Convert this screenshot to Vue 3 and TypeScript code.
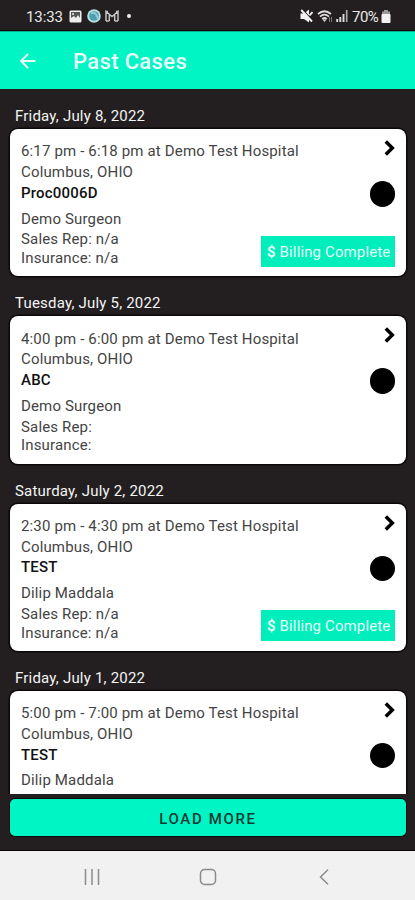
<script setup lang="ts">
interface CaseItem {
  date: string
  time: string
  name: string
  surgeon: string
  rep?: string
  insurance?: string
  billed: boolean
}

const cases: CaseItem[] = [
  { date: 'Friday, July 8, 2022', time: '6:17 pm - 6:18 pm', name: 'Proc0006D', surgeon: 'Demo Surgeon', rep: 'n/a', insurance: 'n/a', billed: true },
  { date: 'Tuesday, July 5, 2022', time: '4:00 pm - 6:00 pm', name: 'ABC', surgeon: 'Demo Surgeon', rep: '', insurance: '', billed: false },
  { date: 'Saturday, July 2, 2022', time: '2:30 pm - 4:30 pm', name: 'TEST', surgeon: 'Dilip Maddala', rep: 'n/a', insurance: 'n/a', billed: true },
  { date: 'Friday, July 1, 2022', time: '5:00 pm - 7:00 pm', name: 'TEST', surgeon: 'Dilip Maddala', billed: false },
]
</script>

<template>
  <div class="screen">
    <div class="status">
      <span class="clock">13:33</span>
      <svg class="ic-photo" width="13" height="13" viewBox="0 0 13 13">
        <rect x=".5" y=".5" width="12" height="12" rx="1.5" fill="#eee" />
        <rect x="2" y="2" width="9" height="6" fill="#555" />
        <path d="M2 10V8l3-2 2 2 2-3 2 3v2z" fill="#eee" />
        <circle cx="4" cy="4" r="1" fill="#eee" />
      </svg>
      <svg class="ic-globe" width="14" height="14" viewBox="0 0 14 14">
        <circle cx="7" cy="7" r="6.800" fill="#b9dce0" />
        <circle cx="7" cy="7" r="4.800" fill="#4b9fb0" />
        <path d="M4 4.500q3-2 5 1t1 4" fill="none" stroke="#91d0cf" stroke-width="1.800" />
      </svg>
      <svg class="ic-mail" width="14" height="12" viewBox="0 0 14 12">
        <path d="M1 11V1.500L7 6.500l6-5V11M4.300 11V4.500M9.700 11V4.500M1 11h3.300M9.700 11H13M1 1.500h2M11 1.500h2" fill="none" stroke="#c4c4c4" stroke-width="1.500" />
      </svg>
      <span class="dot"></span>
      <span class="grow"></span>
      <svg class="ic-mute" width="13" height="14" viewBox="0 0 13 14">
        <path d="M.5 4.500H4l5-4v13L4 10H.5z" fill="#f2f2f2" />
        <path d="M2.500.5l10 11" stroke="#231f20" stroke-width="1.300" />
        <path d="M1.200 1l10.800 11.500M9.500 6.500l3-3.500" stroke="#f2f2f2" stroke-width="1.900" />
      </svg>
      <svg class="ic-wifi" width="16" height="13" viewBox="0 0 16 13">
        <path d="M1 4q6.500-5.500 13 0M3 6.700q4.500-4 9 0M5.300 9q2.200-2 4.400 0" fill="none" stroke="#ddd" stroke-width="1.700" />
        <path d="M5.500 9.500h4l-2 2.500z" fill="#ddd" />
        <path d="M12.500 7v5M14.500 7v5" stroke="#777" />
      </svg>
      <svg class="ic-signal" width="12" height="12" viewBox="0 0 12 12">
        <path d="M1.200 9v3M4.300 7v5M7.500 4v8" stroke="#ddd" stroke-width="1.900" />
        <path d="M10.700 0v12" stroke="#aaa" stroke-width="1.700" />
      </svg>
      <span class="percent">70%</span>
      <svg class="ic-battery" width="10" height="13" viewBox="0 0 10 13">
        <path d="M3 0h4v1.500h2V5H1V1.500h2z" fill="#999" />
        <rect x=".5" y="4" width="9" height="9" rx="1" fill="#f2f2f2" />
      </svg>
    </div>

    <header class="bar">
      <svg width="16" height="16" viewBox="0 0 16 16">
        <path d="M15.500 8H1.500M8 1L1.200 8 8 15" fill="none" stroke="#eafff9" stroke-width="1.900" />
      </svg>
      <h1>Past Cases</h1>
    </header>

    <main class="list">
      <section v-for="(c, i) in cases" :key="i" class="group">
        <h2>{{ c.date }}</h2>
        <article class="card">
          <div class="info">
            <p>{{ c.time }} at Demo Test Hospital</p>
            <p>Columbus, OHIO</p>
            <p class="name">{{ c.name }}</p>
            <p class="surgeon">{{ c.surgeon }}</p>
            <p v-if="c.rep !== undefined" class="rep">Sales Rep: {{ c.rep }}</p>
            <p v-if="c.insurance !== undefined" class="ins">Insurance: {{ c.insurance }}</p>
          </div>
          <div class="side">
            <svg class="chev" width="12" height="18" viewBox="0 0 12 18">
              <path d="M2.800 2.500L9.300 9l-6.500 6.500" fill="none" stroke="#000" stroke-width="3.500" />
            </svg>
            <span class="circle"></span>
            <span v-if="c.billed" class="badge"><b>$</b> Billing Complete</span>
          </div>
        </article>
      </section>
    </main>

    <div class="footer">
      <button type="button">LOAD MORE</button>
    </div>

    <nav class="nav">
      <svg width="16" height="16" viewBox="0 0 16 16">
        <path d="M1.500 0v16M8 0v16M14.500 0v16" stroke="#8b8b8b" stroke-width="1.500" />
      </svg>
      <svg width="18" height="18" viewBox="0 0 18 18">
        <rect x="1.500" y="1.500" width="15" height="15" rx="4.200" fill="none" stroke="#8b8b8b" stroke-width="1.500" />
      </svg>
      <svg width="10" height="16" viewBox="0 0 10 16">
        <path d="M9 .7L1.500 8 9 15.300" fill="none" stroke="#8b8b8b" stroke-width="1.500" />
      </svg>
    </nav>
  </div>
</template>

<style>
body {
  margin: 0;
  background: #231f20;
}
</style>

<style scoped>
.screen {
  width: 415px;
  height: 900px;
  display: flex;
  flex-direction: column;
  background: #231f20;
  font-family: Roboto, "Liberation Sans", sans-serif;
  overflow: hidden;
}
.status {
  height: 31px;
  flex: none;
  display: flex;
  align-items: center;
  box-sizing: border-box;
  padding: 2px 24px 0 26px;
  border-bottom: 1px solid #0c0808;
  color: #e8e8e8;
  font-size: 15px;
}
.clock { width: 43px; padding-top: 1px; letter-spacing: -0.1px; }
.ic-globe { margin-left: 5px; }
.ic-mail { margin-left: 4px; }
.dot {
  width: 4px;
  height: 4px;
  margin-left: 8px;
  border-radius: 50%;
  background: #eee;
}
.grow { flex: 1; }
.ic-wifi { margin-left: 4px; }
.ic-signal { margin-left: 3px; }
.percent { margin-left: 4px; width: 29px; padding-top: 1px; letter-spacing: -0.5px; white-space: nowrap; }
.bar {
  height: 58px;
  flex: none;
  display: flex;
  align-items: center;
  box-sizing: border-box;
  padding: 1px 0 0 20px;
  gap: 37px;
  background: #00f5c4;
  border-top: 1px solid #08b391;
}
h1 {
  margin: 0;
  padding-top: 2px;
  color: #eafff9;
  font-size: 22px;
  line-height: 28px;
  font-weight: 500;
  letter-spacing: 0.35px;
}
.list {
  height: 704.5px;
  flex: none;
  overflow: hidden;
}
.group { height: 187.3px; }
h2 {
  height: 40px;
  margin: 0;
  padding: 17px 0 0 15px;
  box-sizing: border-box;
  color: #f4f4f4;
  font-size: 15px;
  line-height: 20px;
  font-weight: 400;
  letter-spacing: 0.2px;
}
.card {
  height: 147.3px;
  margin: 0 9px 0 10px;
  padding: 12.400px 11px 0 11px;
  box-sizing: border-box;
  display: flex;
  justify-content: space-between;
  border-radius: 8px;
  background: #fff;
  box-shadow: 0 0 0 1.500px #0c0808;
}
p {
  margin: 0;
  color: #444;
  font-size: 15px;
  line-height: 20.700px;
  letter-spacing: 0.155px;
  white-space: pre;
}
.name { color: #111; font-weight: 500; letter-spacing: 0.2px; }
.surgeon { margin-top: 5px; }
.ins { line-height: 17px; }
.side {
  width: 0;
  display: flex;
  flex-direction: column;
  align-items: flex-end;
}
.chev { margin-top: -2.400px; flex: none; }
.circle {
  width: 25.500px;
  height: 25.500px;
  margin-top: 24px;
  flex: none;
  border-radius: 50%;
  background: #000;
}
.badge {
  width: 134px;
  height: 31px;
  margin-top: 29px;
  padding-left: 6px;
  box-sizing: border-box;
  background: #00eebc;
  color: #e4fff7;
  font-size: 15px;
  line-height: 33px;
  letter-spacing: 0.13px;
  white-space: nowrap;
}
.badge b { font-weight: 700; }
.footer {
  flex: none;
  height: 57.500px;
  padding: 5.500px 9px 0 10px;
  box-sizing: border-box;
  border-bottom: 1px solid #080505;
}
button {
  display: block;
  width: 100%;
  height: 37.300px;
  padding: 2px 0 0;
  border: 0;
  border-radius: 5px;
  background: #00f5c4;
  box-shadow: 0 0 0 1px #0c0808;
  color: #103a32;
  font: 500 15px Roboto, "Liberation Sans", sans-serif;
  letter-spacing: 1.650px;
}
.nav {
  flex: 1;
  display: flex;
  align-items: center;
  padding: 2px 0 0 84px;
  background: #f1f1f1;
}
.nav svg + svg { margin-left: 99px; }
.nav svg:last-child { margin-left: 102px; }
</style>
